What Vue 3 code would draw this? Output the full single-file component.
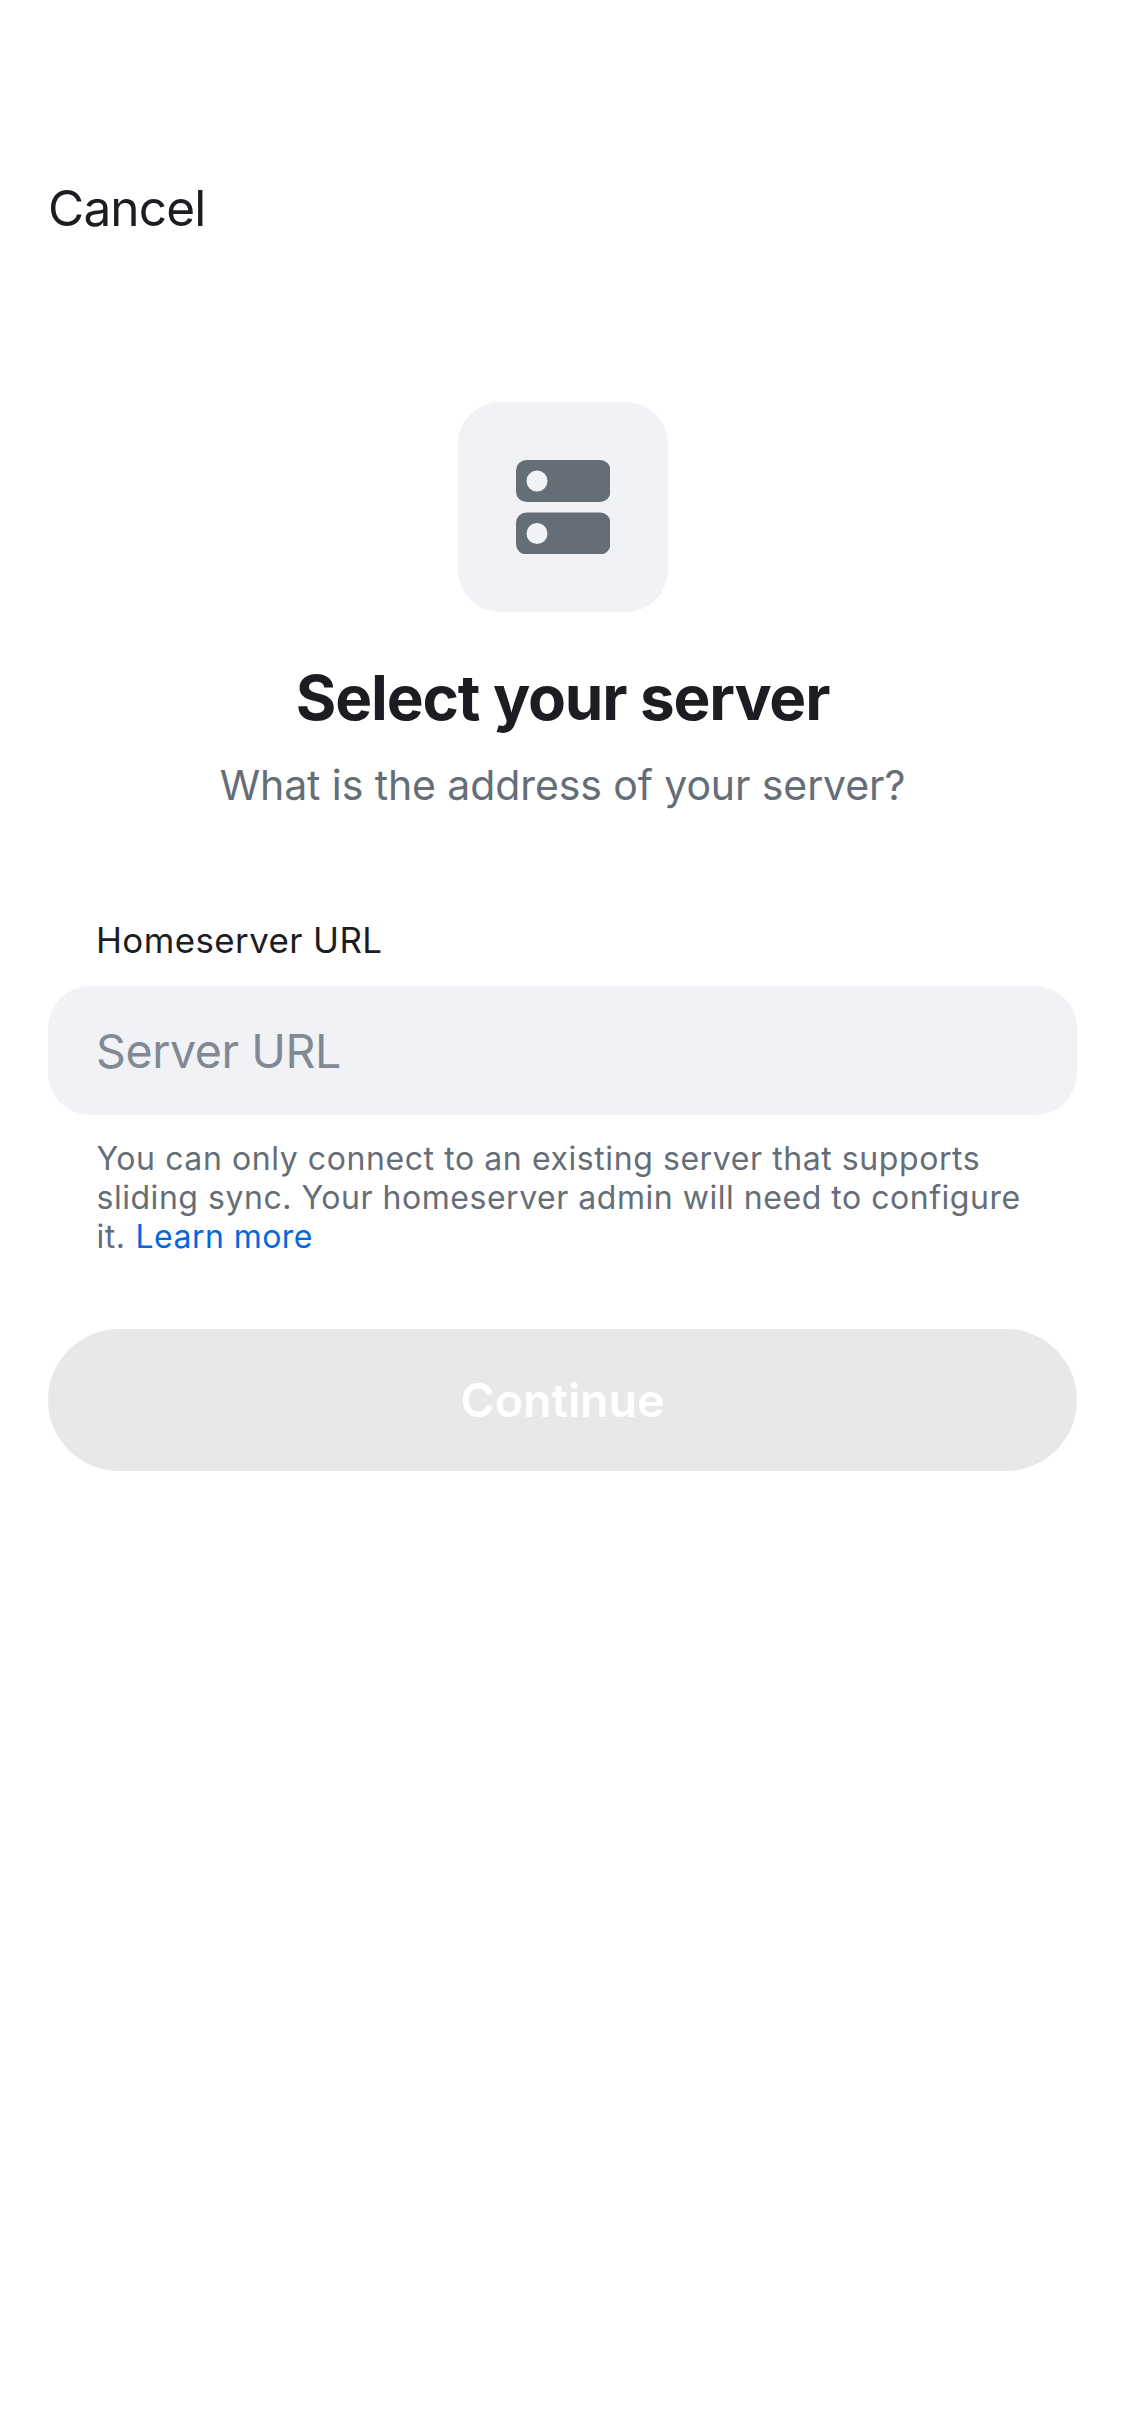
<script setup>
import { ref } from 'vue'

const address = ref('')
</script>

<template>
  <main class="screen">
    <header class="toolbar">
      <a class="cancel">Cancel</a>
    </header>

    <section class="heading">
      <div class="tile">
        <svg class="server-icon" viewBox="0 0 18 18" aria-hidden="true">
          <path
            fill-rule="evenodd"
            d="M2 0h14a2 2 0 0 1 2 2v4a2 2 0 0 1-2 2H2a2 2 0 0 1-2-2V2a2 2 0 0 1 2-2Zm2 2a2 2 0 1 0 0 4 2 2 0 0 0 0-4ZM2 10h14a2 2 0 0 1 2 2v4a2 2 0 0 1-2 2H2a2 2 0 0 1-2-2v-4a2 2 0 0 1 2-2Zm2 2a2 2 0 1 0 0 4 2 2 0 0 0 0-4Z"
          />
        </svg>
      </div>
      <h1 class="title">Select your server</h1>
      <p class="subtitle">What is the address of your server?</p>
    </section>

    <form class="form" @submit.prevent>
      <label class="label" for="server-url">Homeserver URL</label>
      <input id="server-url" v-model="address" class="field" type="text" placeholder="Server URL" />
      <p class="hint">
        <span class="line-one">You can only connect to an existing server that supports</span><br />
        <span>sliding sync. Your homeserver admin will need to configure</span><br />
        <span>it. <a class="link">Learn more</a></span>
      </p>
      <button class="continue" type="submit" disabled>Continue</button>
    </form>
  </main>
</template>

<style>
body {
  background: #fff;
}
</style>

<style scoped>
.screen {
  box-sizing: border-box;
  display: flex;
  flex-direction: column;
  min-height: 2436px;
  padding: 178px 48px 0;
  background: #fff;
  color: #1b1d22;
  font-family: Inter, "Liberation Sans", sans-serif;
}

.toolbar {
  display: flex;
  height: 60px;
}

.cancel {
  font-size: 49.6px;
  line-height: 60px;
  letter-spacing: -0.85px;
}

.heading {
  display: flex;
  flex-direction: column;
  align-items: center;
  margin-top: 164px;
}

.tile {
  display: flex;
  align-items: center;
  justify-content: center;
  width: 210px;
  height: 210px;
  margin-left: 1px;
  border-radius: 42px;
  background: #f0f2f5;
}

.server-icon {
  width: 94.5px;
  height: 94.5px;
  fill: #656d77;
}

.title {
  margin: 47px 0 0;
  font-size: 62px;
  font-weight: 700;
  line-height: 78px;
  letter-spacing: -1.14px;
}

.subtitle {
  margin: 21px 0 0;
  color: #656d77;
  font-size: 41px;
  line-height: 54px;
  letter-spacing: -0.1px;
}

.form {
  display: flex;
  flex-direction: column;
  margin-top: 107px;
}

.label {
  padding-left: 48px;
  font-size: 34.9px;
  line-height: 42px;
  letter-spacing: 0.42px;
}

.field {
  box-sizing: border-box;
  width: 100%;
  height: 129px;
  margin: 25px 0 0;
  padding: 1px 48px 0;
  border: 0;
  border-radius: 42px;
  outline: 0;
  background: #f0f2f5;
  color: #1b1d22;
  font: 46.5px Inter, "Liberation Sans", sans-serif;
  letter-spacing: -0.4px;
}

.field::placeholder {
  color: #808994;
  opacity: 1;
}

.hint {
  margin: 24px 0 0;
  padding-left: 48.5px;
  color: #656d77;
  font-size: 32px;
  line-height: 39px;
  letter-spacing: 0.53px;
  white-space: nowrap;
}

.line-one {
  letter-spacing: 0.58px;
}

.link {
  margin-left: 0.5px;
  color: #0467dd;
  letter-spacing: 0.45px;
}

.continue {
  height: 142px;
  margin: 73px 0 0;
  padding: 0;
  border: 0;
  border-radius: 71px;
  background: #e8e8e8;
  color: #fff;
  font: 600 46.5px Inter, "Liberation Sans", sans-serif;
}
</style>
